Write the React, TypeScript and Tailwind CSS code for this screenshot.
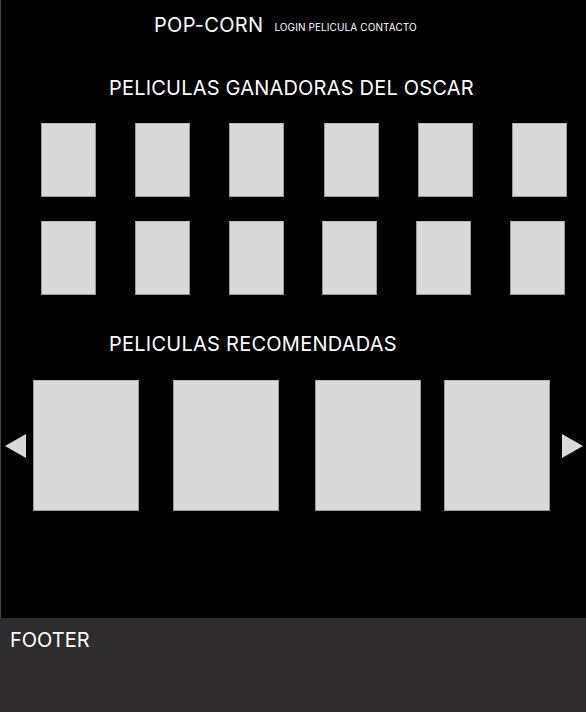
import React from "react";

const oscarRows = [
  { id: 1, width: "w-[526px]", items: [1, 2, 3, 4, 5, 6] },
  { id: 2, width: "w-[524px]", items: [7, 8, 9, 10, 11, 12] },
];

const recommended = [
  { id: 1, ml: "ml-[7px]" },
  { id: 2, ml: "ml-[34px]" },
  { id: 3, ml: "ml-[36px]" },
  { id: 4, ml: "ml-[23px]" },
];

function Poster({ className = "" }: { className?: string }) {
  return <div className={`bg-[#d9d9d9] border border-[#9a9a9a] border-t-[#b8b8b8] ${className}`} />;
}

export default function App() {
  return (
    <div className="w-[586px] h-[712px] flex flex-col text-white font-['Inter',sans-serif] overflow-hidden">
      <main className="h-[618px] bg-black border-l border-[#4a4a4a]">
        <header className="flex items-start pt-[13px] pl-[153px]">
          <span className="text-[20px] leading-6 tracking-[0.3px]">POP-CORN</span>
          <nav className="ml-[11px] mt-[8px] text-[10px] leading-3 tracking-[0.1px]">LOGIN PELICULA CONTACTO</nav>
        </header>

        <h2 className="mt-[39px] pl-[108px] text-[20px] leading-6 tracking-[0.2px]">PELICULAS GANADORAS DEL OSCAR</h2>
        <div className="mt-[23px] flex flex-col gap-[24px] pl-[40px]">
          {oscarRows.map((row) => (
            <div key={row.id} className={`flex justify-between ${row.width}`}>
              {row.items.map((i) => (
                <Poster key={i} className="w-[55px] h-[74px]" />
              ))}
            </div>
          ))}
        </div>

        <h2 className="mt-[37px] pl-[108px] text-[20px] leading-6 tracking-[0.25px]">PELICULAS RECOMENDADAS</h2>
        <div className="mt-[24px] flex items-center pl-[4px]">
          <svg width="21" height="24" viewBox="0 0 21 24" className="shrink-0">
            <polygon points="0,12 21,0 21,24" fill="#d9d9d9" />
          </svg>
          {recommended.map((r) => (
            <Poster key={r.id} className={`${r.ml} w-[106px] h-[131px] shrink-0`} />
          ))}
          <svg width="21" height="24" viewBox="0 0 21 24" className="ml-[12px] shrink-0">
            <polygon points="0,0 21,12 0,24" fill="#d9d9d9" />
          </svg>
        </div>
      </main>
      <footer className="h-[94px] bg-[#2e2c2d] pt-[10px] pl-[10px]">
        <span className="text-[20px] leading-6">FOOTER</span>
      </footer>
    </div>
  );
}
